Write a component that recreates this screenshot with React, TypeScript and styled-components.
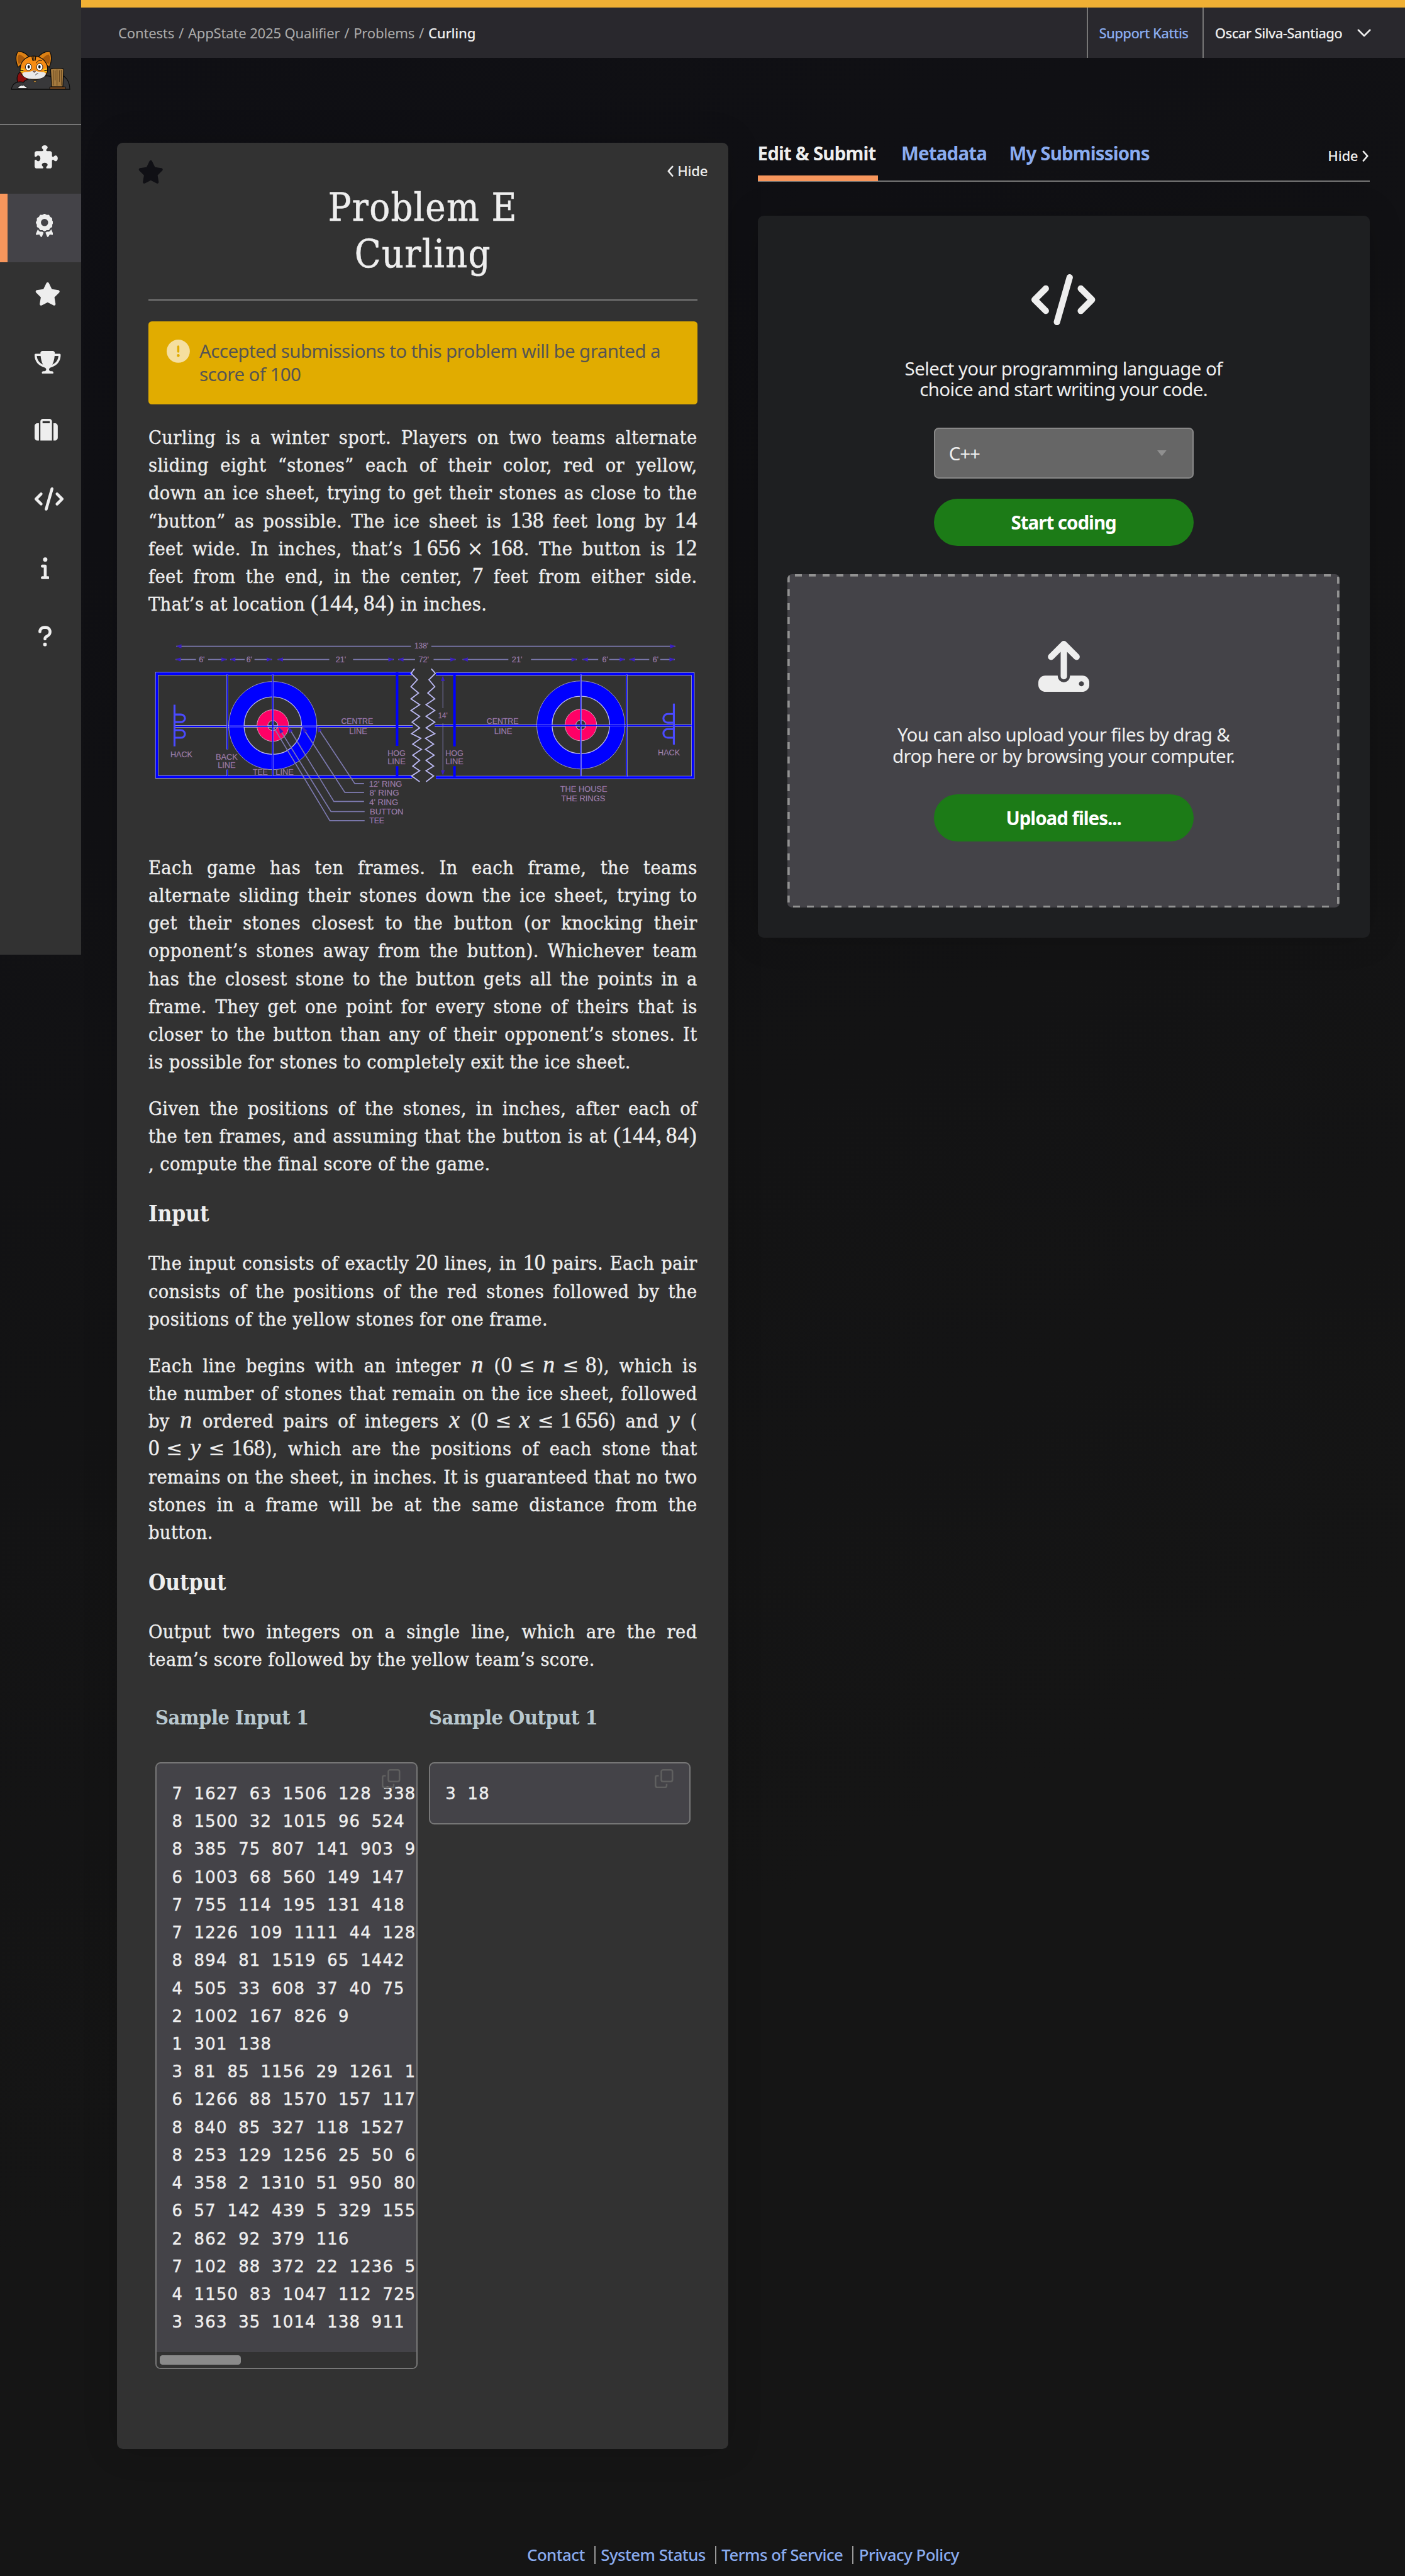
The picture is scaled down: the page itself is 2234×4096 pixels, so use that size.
import React from 'react';
import styled, { createGlobalStyle, css } from 'styled-components';
import {
  FaPuzzlePiece,
  FaAward,
  FaStar,
  FaTrophy,
  FaSuitcase,
  FaCode,
  FaInfo,
  FaQuestion,
  FaCircleExclamation,
} from 'react-icons/fa6';

const sans = `"Noto Sans", "Open Sans", sans-serif`;
const serif = `"DejaVu Serif Condensed", "DejaVu Serif", serif`;
const c = {
  text: '#eeeeee',
  panel: '#323232',
  raised: '#444348',
  line: '#777777',
  link: '#8aacf0',
  orange: '#f7965c',
  green: '#1c7b17',
};
// Just over two device pixels, so that the hairlines are not rounded down to one.
const hair = '0.22rem';

// The page is laid out on a grid of 242.4rem across.
const GlobalStyle = createGlobalStyle`
  html { font-size: 9.2162px; }
  body { margin: 0; background: #151515; color: ${c.text}; font-family: ${sans}; }
  *, *::before, *::after { box-sizing: border-box; }
  h1, h2, h3, p, pre { margin: 0; font-weight: normal; }
  svg { display: block; flex: none; }
`;

const Page = styled.div`
  display: flex;
  align-items: flex-start;
  width: 242.4rem;
  height: 444.4rem;
  overflow: hidden;
  background: linear-gradient(155deg, #0f0f14 0%, #101014 18%, #131314 45%, #151515 70%);
`;

/* ---------- sidebar ---------- */
const Sidebar = styled.aside`
  flex: none;
  width: 14rem;
  height: 164.7rem;
  background: ${c.panel};
`;
const Logo = styled.div`
  height: 21.6rem;
  padding: 8.7rem 0 0 1.8rem;
  border-bottom: ${hair} solid ${c.line};
  svg { width: 10.4rem; height: 6.9rem; }
`;
const NavItem = styled.div<{ $active?: boolean }>`
  display: flex;
  align-items: center;
  height: 11.8rem;
  padding: 0 0 0.8rem 6rem;
  ${(p) => p.$active && css`
    padding-left: 4.6rem;
    border-left: 1.4rem solid ${c.orange};
    background: ${c.raised};
  `}
`;
const NavGlyph = styled.span<{ $w: number }>`
  display: flex;
  justify-content: center;
  min-width: 3.5rem;
  svg { height: 4rem; width: ${(p) => p.$w}rem; }
`;

/* ---------- header ---------- */
const Main = styled.div`
  display: flex;
  flex-direction: column;
  width: 228.4rem;
  height: 444.4rem;
`;
const Header = styled.header`
  display: flex;
  height: 10rem;
  flex: none;
  border-top: 1.41rem solid #f0b034;
  background: #29282d;
  font-size: 2.4rem;
`;
const Crumbs = styled.nav`
  display: flex;
  align-items: center;
  gap: 0.75rem;
  flex: 1;
  padding-left: 6.4rem;
  color: #ababab;
  letter-spacing: -0.009em;
`;
const Current = styled.span`color: ${c.text}; font-weight: 500;`;
const HeaderCell = styled.div<{ $w: string; $link?: boolean }>`
  display: flex;
  align-items: center;
  gap: 2.6rem;
  width: ${(p) => p.$w};
  padding-left: 1.9rem;
  border-left: ${hair} solid ${c.line};
  color: ${(p) => (p.$link ? c.link : c.text)};
  font-weight: 500;
  letter-spacing: -0.029em;
  white-space: nowrap;
`;

/* ---------- columns ---------- */
const Columns = styled.div`
  display: flex;
  gap: 5rem;
  align-items: flex-start;
  padding: 14.6rem 6.1rem 0 6.2rem;
`;
const Problem = styled.article`
  width: 105.5rem;
  height: 397.95rem;
  flex: none;
  border-radius: 1rem;
  background: ${c.panel};
  box-shadow: 0 0 6rem rgba(0, 0, 0, 0.16);
`;
const CardTop = styled.div`
  display: flex;
  justify-content: space-between;
  align-items: flex-start;
  height: 7.3rem;
  padding: 3.1rem 3.6rem 0 3.6rem;
`;
const FavStar = styled(FaStar)`width: 4.5rem; height: 4rem; color: #101015;`;
const Hide = styled.div`
  display: flex;
  align-items: center;
  gap: 0.7rem;
  font-size: 2.4rem;
  line-height: 3.6rem;
  font-weight: 500;
  letter-spacing: -0.01em;
`;
const Body = styled.div`padding: 0 5.4rem; font-family: ${serif};`;
const Title = styled.h1`
  padding-bottom: 3.8rem;
  border-bottom: ${hair} solid ${c.line};
  font-size: 6.6rem;
  line-height: 8rem;
  letter-spacing: 0.02em;
  text-align: center;
  -webkit-text-stroke: 0.06rem;
`;
const Alert = styled.div`
  display: flex;
  gap: 1.6rem;
  height: 14.4rem;
  margin: 3.5rem 0 3.3rem;
  padding: 3.2rem 3.2rem 0;
  border-radius: 0.6rem;
  background: #e1ac00;
  color: #555453;
  font: 3.2rem/4rem ${sans};
  letter-spacing: -0.0195em;
  white-space: nowrap;
  svg { width: 4rem; height: 4rem; color: #f5dfa0; }
`;
const Para = styled.p`
  margin-bottom: 3.2rem;
  font-size: 3.3rem;
  line-height: 4.8rem;
  letter-spacing: 0.0145em;
  -webkit-text-stroke: 0.045rem;
`;
const Line = styled.span<{ $last?: boolean }>`
  display: block;
  height: 4.8rem;
  white-space: ${(p) => (p.$last ? 'nowrap' : 'normal')};
  text-align-last: ${(p) => (p.$last ? 'left' : 'justify')};
`;
const MathSpan = styled.span<{ $wide?: boolean }>`
  display: inline-block;
  font-family: "Liberation Serif", serif;
  font-size: 3.8rem;
  line-height: 0;
  letter-spacing: ${(p) => (p.$wide ? '0.028em' : '0.008em')};
  white-space: nowrap;
  text-align-last: left;
`;
const Op = styled.span`
  margin: 0 0.33em;
  font-family: "DejaVu Sans", sans-serif;
  font-size: 3.4rem;
  -webkit-text-stroke: 0;
`;
const Var = styled.i`margin: 0 0.04em; font-size: 4.1rem;`;
const Thin = styled.span`display: inline-block; width: 0.65rem;`;
const Section = styled.h2`
  margin: 3.75rem 0 3.8rem;
  font-size: 3.8rem;
  line-height: 4.8rem;
  font-weight: bold;
  letter-spacing: -0.004em;
`;
const Diagram = styled.svg`
  width: 94.7rem;
  height: 36rem;
  margin: -1.75rem 0 3.15rem;
`;

/* ---------- samples ---------- */
const Samples = styled.div`
  display: flex;
  gap: 2rem;
  margin-top: 5.1rem;
  padding: 0 1.2rem;
`;
const Sample = styled.section`width: 45.2rem;`;
const SampleTitle = styled.h3`
  margin-bottom: 5.3rem;
  color: #b8c8cf;
  font-size: 3.5rem;
  line-height: 4.8rem;
  font-weight: bold;
  letter-spacing: -0.014em;
  white-space: nowrap;
`;
const SampleBox = styled.div`
  position: relative;
  overflow: hidden;
  border: ${hair} solid ${c.line};
  border-radius: 0.9rem;
  background: ${c.raised};
`;
const Code = styled.pre`
  padding: 2.85rem 0 2.75rem 2.65rem;
  font: 2.8rem/4.8rem "DejaVu Sans", sans-serif;
  letter-spacing: 0.136rem;
  word-spacing: 0.88rem;
  -webkit-text-stroke: 0.05rem;
`;
const CopyBtn = styled.svg`
  position: absolute;
  top: 1rem;
  right: 2.7rem;
  width: 3.2rem;
  height: 3.3rem;
`;
const ScrollTrack = styled.div`height: 2.75rem; padding: 0.55rem; background: ${c.panel};`;
const ScrollThumb = styled.div`width: 14rem; height: 1.6rem; border-radius: 0.5rem; background: #8a8a8a;`;

/* ---------- submit panel ---------- */
const Submit = styled.section`width: 105.6rem;`;
const Tabs = styled.div`
  display: flex;
  gap: 4rem;
  height: 6.8rem;
  border-bottom: ${hair} solid ${c.line};
`;
const Tab = styled.div<{ $active?: boolean; $w: string }>`
  width: ${(p) => p.$w};
  height: 6.6rem;
  border-bottom: ${(p) => (p.$active ? `1rem solid ${c.orange}` : 'none')};
  color: ${(p) => (p.$active ? c.text : c.link)};
  font-size: 3.2rem;
  line-height: 3.6rem;
  font-weight: bold;
  letter-spacing: -0.028em;
  white-space: nowrap;
`;
const TabHide = styled(Hide)`margin-left: auto; height: 4.2rem; padding: 0.4rem 0.2rem 0 0;`;
const Panel = styled.div`
  display: flex;
  flex-direction: column;
  align-items: center;
  height: 124.6rem;
  margin-top: 5.8rem;
  padding-top: 10.1rem;
  border-radius: 1rem;
  background: #1e1f21;
  box-shadow: 0 0 6rem rgba(0, 0, 0, 0.16);
`;
const CodeGlyph = styled(FaCode)`width: 11rem; height: 8.8rem;`;
const Prompt = styled.p<{ $ls: string }>`
  margin: 5.6rem 0 4.8rem;
  font-size: 3.2rem;
  line-height: 3.66rem;
  letter-spacing: ${(p) => p.$ls};
  text-align: center;
  white-space: nowrap;
`;
const Select = styled.div`
  display: flex;
  align-items: center;
  justify-content: space-between;
  width: 44.8rem;
  height: 8.8rem;
  margin-bottom: 3.4rem;
  padding: 0 4.4rem 0 2.4rem;
  border: ${hair} solid #888;
  border-radius: 0.8rem;
  background: #666;
  font-size: 3.2rem;
  letter-spacing: -0.04em;
`;
const Button = styled.div`
  display: flex;
  align-items: center;
  justify-content: center;
  width: 44.8rem;
  height: 8.2rem;
  flex: none;
  border-radius: 4.1rem;
  background: ${c.green};
  color: #fff;
  font-size: 3.2rem;
  font-weight: bold;
  letter-spacing: -0.034em;
`;
const dash = '#929292 0 1.2rem, transparent 1.2rem 2.4rem';
const DropZone = styled.div`
  display: flex;
  flex-direction: column;
  align-items: center;
  width: 95.2rem;
  height: 57.5rem;
  margin-top: 4.9rem;
  padding-top: 11.4rem;
  border-radius: 0.8rem;
  background:
    repeating-linear-gradient(90deg, ${dash}) 1.3rem 0 / 93rem 0.4rem no-repeat,
    repeating-linear-gradient(90deg, ${dash}) 0.9rem 100% / 93.4rem 0.4rem no-repeat,
    repeating-linear-gradient(180deg, ${dash}) 0 0.2rem / 0.4rem 57rem no-repeat,
    repeating-linear-gradient(180deg, ${dash}) 100% 0.4rem / 0.4rem 57rem no-repeat,
    ${c.raised};
`;

/* ---------- footer ---------- */
const Footer = styled.footer`
  display: flex;
  justify-content: center;
  margin-top: auto;
  padding-bottom: 2rem;
  font-size: 2.8rem;
  line-height: 3.2rem;
  letter-spacing: -0.021em;
`;
const FooterLink = styled.a`
  padding: 0 1.6rem 0 0.95rem;
  border-left: ${hair} solid #999;
  color: ${c.link};
  font-weight: 500;
  &:first-child { padding-left: 0; border-left: 0; }
  &:last-child { padding-right: 0; }
`;

/* ---------- drawings ---------- */
const Chevron = ({ d, w, h }: { d: string; w: number; h: number }) => (
  <svg viewBox={`0 0 ${w} ${h}`} width={`${w / 10}rem`} height={`${h / 10}rem`}>
    <path d={d} fill="none" stroke="currentColor" strokeWidth="2.8" strokeLinecap="round" strokeLinejoin="round" />
  </svg>
);

const Cat = () => (
  <svg viewBox="24 22 312 204" stroke="#0c0c0c" strokeWidth="4" strokeLinejoin="round">
    <path d="M62 190 C50 160 62 135 82 128 L190 132 C210 140 214 165 205 185Z" fill="#8c0d0d" />
    <path d="M28 222 C32 190 60 178 90 186 C110 160 150 165 155 165 C200 150 225 150 236 160 L300 155 C325 175 330 200 330 222Z" fill="#38383a" />
    <path d="M62 108 C48 74 50 44 62 27 C92 26 112 42 120 60Z" fill="#dd8114" />
    <path d="M66 92 C56 66 58 52 68 42 C84 48 96 58 100 68Z" fill="#a85a0c" stroke="none" />
    <path d="M224 108 C238 74 236 44 226 27 C196 26 174 42 166 60Z" fill="#dd8114" />
    <path d="M222 92 C232 66 228 52 220 42 C204 48 192 58 188 68Z" fill="#a85a0c" stroke="none" />
    <path d="M143 50 C190 50 218 90 215 122 C214 152 185 171 146 171 C105 171 73 152 73 118 C74 80 100 50 143 50Z" fill="#f58c14" />
    <path d="M76 116 l18 5 M74 130 l18 1 M212 116 l-18 5 M212 130 l-18 1" stroke="#f8c81c" strokeWidth="6" />
    <path d="M76 124 l14 3 M212 124 l-14 3" strokeWidth="4" />
    <path d="M134 52 l4 22 M144 50 v26 M154 51 l-3 23" strokeWidth="4" />
    <path d="M84 140 C96 128 124 136 145 124 C168 136 192 128 206 140 C204 160 182 169 146 169 C108 169 86 160 84 140Z" fill="#e9e9ea" stroke="none" />
    <ellipse cx="116" cy="107" rx="16" ry="18" fill="#fff" strokeWidth="3" />
    <ellipse cx="174" cy="107" rx="16" ry="18" fill="#fff" strokeWidth="3" />
    <ellipse cx="117" cy="106" rx="6" ry="9" fill="#111" stroke="none" />
    <ellipse cx="173" cy="106" rx="6" ry="9" fill="#111" stroke="none" />
    <path d="M139 128 h14 l-7 8Z" fill="#c98c82" strokeWidth="2" />
    <path d="M152 148 q4 -6 14 -7 M156 88 q10 -20 30 -14" fill="none" strokeWidth="3" />
    <path d="M138 178 h22 l-10 10Z" fill="#b08238" strokeWidth="2" />
    <path d="M230 118 C242 112 288 112 298 118 L294 210 H236Z" fill="#a57a3e" />
    <path d="M244 122 v80 M254 126 v50 M264 120 v84 M276 124 v60 M286 122 v80" stroke="#5a3d18" strokeWidth="3" />
    <path d="M226 210 H308 V221 H226Z" fill="#7a4a20" strokeWidth="3" />
    <path d="M62 218 q0 -14 10 -12 q4 -8 12 -3 q8 -5 13 3 q12 0 12 12Z" fill="#eee" strokeWidth="3" />
    <path d="M26 222 H332" />
  </svg>
);

const UploadGlyph = () => (
  <svg viewBox="0 0 88 88" width="8.8rem" height="8.8rem">
    <path
      d="M12 60 H33.5 V61 a10.5 10.5 0 0 0 21 0 V60 H76 a12 12 0 0 1 12 12 V76 a12 12 0 0 1 -12 12 H12 a12 12 0 0 1 -12 -12 V72 a12 12 0 0 1 12 -12Z M74.3 69.8 a4.3 4.3 0 1 0 0.01 0Z"
      fill={c.text}
      fillRule="evenodd"
    />
    <path d="M22 27.5 L44 5.5 L66 27.5 M44 8 V61" fill="none" stroke={c.text} strokeWidth="11" strokeLinecap="round" strokeLinejoin="round" />
  </svg>
);

const CopyIcon = () => (
  <CopyBtn viewBox="0 0 32 33" fill="none" stroke="#5f5f5f" strokeWidth="2.8">
    <rect x="11.4" y="1.4" width="19.2" height="20" rx="3" />
    <path d="M7 11.4 H4.4 a3 3 0 0 0 -3 3 V28.6 a3 3 0 0 0 3 3 H17.6 a3 3 0 0 0 3 -3 V25.4" />
  </CopyBtn>
);

const BLUE = '#0000ff';
const PALE = '#b9b7f0';
const DIM = '#7d7ab0';

const zigY = [72, 80, 91, 103, 114, 124, 134, 144, 154, 164, 174, 184, 192, 202, 211, 221, 230, 240, 248, 257, 267];
const zigL = [475, 469, 480, 469, 482, 469, 484, 469, 484, 471, 484, 470, 486, 472, 487, 472, 484, 472, 484, 470, 484];
const zigR = [504, 511, 500, 510, 498, 510, 495, 510, 495, 510, 495, 510, 494, 508, 494, 509, 495, 508, 495, 508, 495];
const zig = (xs: number[]) => xs.map((x, i) => `${x},${zigY[i]}`).join(' ');

const House = ({ x, y }: { x: number; y: number }) => (
  <g>
    <circle cx={x} cy={y} r="62.5" fill="none" stroke={BLUE} strokeWidth="26" />
    <circle cx={x} cy={y} r="76" fill="none" stroke={PALE} strokeWidth="0.8" />
    <circle cx={x} cy={y} r="49.5" fill="none" stroke={PALE} strokeWidth="1.4" />
    <circle cx={x} cy={y} r="18" fill="none" stroke="#ff0066" strokeWidth="18" />
    <circle cx={x} cy={y} r="27.3" fill="none" stroke="#e8a8c8" strokeWidth="1" />
    <circle cx={x} cy={y} r="8.6" fill="none" stroke="#e8c8e8" strokeWidth="1" />
  </g>
);

const Span = ({ x1, x2, y, gap }: { x1: number; x2: number; y: number; gap: [number, number] }) => (
  <g>
    <path d={`M${x1} ${y} H${gap[0]} M${gap[1]} ${y} H${x2}`} stroke={DIM} strokeWidth="1.8" />
    <path d={`M${x1} ${y} l9 -3.6 v7.2Z M${x2} ${y} l-9 -3.6 v7.2Z`} fill="#3a1fc0" />
  </g>
);

const labels: [string, number, number, number][] = [
  ["138'", 487, 37, 24], ["6'", 108, 61, 10], ["6'", 190, 61, 10], ["21'", 348, 61, 18], ["72'", 491, 61, 18],
  ["21'", 652, 61, 18], ["6'", 804, 61, 10], ["6'", 891, 61, 10], ["14'", 524, 157, 16],
  ['CENTRE', 376, 167, 55], ['LINE', 378, 185, 31], ['CENTRE', 627, 167, 55], ['LINE', 628, 185, 31],
  ['HACK', 73, 225, 38], ['BACK', 151, 229, 38], ['LINE', 151, 243, 31], ['TEE', 209, 255, 26], ['LINE', 251, 255, 31],
  ['HOG', 444, 222, 31], ['LINE', 444, 237, 31], ['HOG', 544, 222, 31], ['LINE', 544, 237, 31], ['HACK', 914, 221, 38],
  ["12' RING", 425, 276, 57], ["8' RING", 423, 291, 51], ["4' RING", 422, 307, 50], ['BUTTON', 427, 323, 58], ['TEE', 410, 339, 26],
  ['THE HOUSE', 767, 284, 81], ['THE RINGS', 766, 301, 76],
];

const Rink = () => (
  <Diagram viewBox="16 0 947 360">
    <g fill="none">
      <Span x1={64} x2={925} y={33.3} gap={[469, 504]} />
      <Span x1={63} x2={151} y={56} gap={[98, 119]} />
      <Span x1={157} x2={229} y={56} gap={[182, 199]} />
      <Span x1={239} x2={439} y={56} gap={[328, 369]} />
      <Span x1={447} x2={546} y={56} gap={[476, 508]} />
      <Span x1={558} x2={755} y={56} gap={[637, 676]} />
      <Span x1={765} x2={838} y={56} gap={[792, 811]} />
      <Span x1={846} x2={924} y={56} gap={[880, 899]} />
      <path d="M471 80.5 H30.5 V258.5 H471" stroke={PALE} strokeWidth="5.4" />
      <path d="M471 80.5 H30.5 V258.5 H471" stroke={BLUE} strokeWidth="4" />
      <path d="M512 81 H955.5 V259.5 H512" stroke={PALE} strokeWidth="5.4" />
      <path d="M512 81 H955.5 V259.5 H512" stroke={BLUE} strokeWidth="4" />
      <path d="M61 171.5 H472 M510 170 H953" stroke={PALE} strokeWidth="3.8" />
      <path d="M61 171.5 H472 M510 170 H953" stroke={BLUE} strokeWidth="2.2" />
      <path d="M445 78 V205 M445 240 V258 M544 82 V206 M544 240 V258" stroke={BLUE} strokeWidth="4.4" />
      <path d="M152 82 V211 M152 246 V257 M841 82 V258" stroke={PALE} strokeWidth="2.8" />
      <path d="M152 82 V211 M152 246 V257 M841 82 V258" stroke={BLUE} strokeWidth="1.6" />
      <path d="M524 86 V140 M524 166 V254" stroke={DIM} strokeWidth="1" />
      <path d="M524 84 l-3.4 9 h6.8Z M524 256 l-3.4 -9 h6.8Z" fill="#3a1fc0" />
      <House x={230.6} y={170} />
      <House x={762} y={169} />
      <path d="M230.6 82 V257 M762 82 V257 M156 171.5 H306 M686 169.8 H838" stroke={PALE} strokeWidth="2.8" />
      <path d="M230.6 82 V257 M762 82 V257 M156 171.5 H306 M686 169.8 H838" stroke={BLUE} strokeWidth="1.6" />
      <g stroke="#4a4aff" strokeWidth="3.4">
        <path d="M61 134 V206 M62 151 H72 a7 6.5 0 0 1 0 13 H62 M62 178 H72 a7 6.5 0 0 1 0 13 H62" />
        <path d="M922.5 132 V203 M922 150 H912 a7 7 0 0 0 0 15 H922 M922 176 H912 a7 7 0 0 0 0 15 H922" />
      </g>
      <g stroke={DIM} strokeWidth="1.8">
        <path d="M307 172 L372 270 H388" />
        <path d="M281 172 L355 285.5 H388" />
        <path d="M257 172 L336 301 H388" />
        <path d="M241 174 L331 318.5 H389" />
        <path d="M232 173 L329 334 H389" />
      </g>
      <path d="M307 171 l8 7 -6 4Z M282 172 l8 7 -6 4Z M257 172 l8 7 -6 4Z M241 173 l8 7 -6 4Z" fill="#3a1fc0" />
      <polyline points={zig(zigL)} stroke={PALE} strokeWidth="2" />
      <polyline points={zig(zigR)} stroke={PALE} strokeWidth="2" />
    </g>
    <g fill="#a892b6" stroke="#7a4f86" strokeWidth="0.3" fontFamily="Liberation Sans, sans-serif" fontSize="14" textAnchor="middle">
      {labels.map(([t, x, y, w], i) => (
        <text key={i} x={x} y={y} textLength={w} lengthAdjust="spacingAndGlyphs">{t}</text>
      ))}
    </g>
  </Diagram>
);

/* ---------- content ---------- */
const M = MathSpan;
const Point = () => <M $wide>(144,<Thin />84)</M>;
const Leq = () => <Op>≤</Op>;

const Text = ({ lines }: { lines: React.ReactNode[] }) => (
  <Para>
    {lines.map((l, i) => (
      <Line key={i} $last={i === lines.length - 1}>{l}</Line>
    ))}
  </Para>
);

const nav = [
  { Icon: FaPuzzlePiece, w: 4 },
  { Icon: FaAward, w: 3, active: true },
  { Icon: FaStar, w: 4.5 },
  { Icon: FaTrophy, w: 4.5 },
  { Icon: FaSuitcase, w: 4 },
  { Icon: FaCode, w: 5 },
  { Icon: FaInfo, w: 1.5 },
  { Icon: FaQuestion, w: 2.5 },
];

const sampleInput = `7 1627 63 1506 128 338
8 1500 32 1015 96 524
8 385 75 807 141 903 9
6 1003 68 560 149 147
7 755 114 195 131 418
7 1226 109 1111 44 128
8 894 81 1519 65 1442
4 505 33 608 37 40 75
2 1002 167 826 9
1 301 138
3 81 85 1156 29 1261 1
6 1266 88 1570 157 117
8 840 85 327 118 1527
8 253 129 1256 25 50 6
4 358 2 1310 51 950 80
6 57 142 439 5 329 155
2 862 92 379 116
7 102 88 372 22 1236 5
4 1150 83 1047 112 725
3 363 35 1014 138 911`;

export default function App() {
  return (
    <>
      <GlobalStyle />
      <Page>
        <Sidebar>
          <Logo><Cat /></Logo>
          {nav.map(({ Icon, w, active }, i) => (
            <NavItem key={i} $active={active}>
              <NavGlyph $w={w}><Icon /></NavGlyph>
            </NavItem>
          ))}
        </Sidebar>
        <Main>
          <Header>
            <Crumbs>
              <span>Contests</span><span>/</span><span>AppState 2025 Qualifier</span><span>/</span>
              <span>Problems</span><span>/</span><Current>Curling</Current>
            </Crumbs>
            <HeaderCell $w="20rem" $link>Support Kattis</HeaderCell>
            <HeaderCell $w="34.9rem">
              Oscar Silva-Santiago
              <Chevron w={24} h={16} d="M2 3 L12 13 L22 3" />
            </HeaderCell>
          </Header>
          <Columns>
            <Problem>
              <CardTop>
                <FavStar />
                <Hide><Chevron w={11} h={20} d="M9 2 L2 10 L9 18" />Hide</Hide>
              </CardTop>
              <Body>
                <Title>Problem E<br />Curling</Title>
                <Alert>
                  <FaCircleExclamation />
                  <div>Accepted submissions to this problem will be granted a<br />score of 100</div>
                </Alert>
                <Text
                  lines={[
                    'Curling is a winter sport. Players on two teams alternate',
                    'sliding eight “stones” each of their color, red or yellow,',
                    'down an ice sheet, trying to get their stones as close to the',
                    <>“button” as possible. The ice sheet is <M>138</M> feet long by <M>14</M></>,
                    <>feet wide. In inches, that’s <M>1<Thin />656<Op>×</Op>168</M>. The button is <M>12</M></>,
                    <>feet from the end, in the center, <M>7</M> feet from either side.</>,
                    <>That’s at location <Point /> in inches.</>,
                  ]}
                />
                <Rink />
                <Text
                  lines={[
                    'Each game has ten frames. In each frame, the teams',
                    'alternate sliding their stones down the ice sheet, trying to',
                    'get their stones closest to the button (or knocking their',
                    'opponent’s stones away from the button). Whichever team',
                    'has the closest stone to the button gets all the points in a',
                    'frame. They get one point for every stone of theirs that is',
                    'closer to the button than any of their opponent’s stones. It',
                    'is possible for stones to completely exit the ice sheet.',
                  ]}
                />
                <Text
                  lines={[
                    'Given the positions of the stones, in inches, after each of',
                    <>the ten frames, and assuming that the button is at <Point /></>,
                    ', compute the final score of the game.',
                  ]}
                />
                <Section>Input</Section>
                <Text
                  lines={[
                    <>The input consists of exactly <M>20</M> lines, in <M>10</M> pairs. Each pair</>,
                    'consists of the positions of the red stones followed by the',
                    'positions of the yellow stones for one frame.',
                  ]}
                />
                <Text
                  lines={[
                    <>Each line begins with an integer <M><Var>n</Var></M> (<M>0<Leq /><Var>n</Var><Leq />8</M>), which is</>,
                    'the number of stones that remain on the ice sheet, followed',
                    <>by <M><Var>n</Var></M> ordered pairs of integers <M><Var>x</Var></M> (<M>0<Leq /><Var>x</Var><Leq />1<Thin />656</M>) and <M><Var>y</Var></M> (</>,
                    <><M>0<Leq /><Var>y</Var><Leq />168</M>), which are the positions of each stone that</>,
                    'remains on the sheet, in inches. It is guaranteed that no two',
                    'stones in a frame will be at the same distance from the',
                    'button.',
                  ]}
                />
                <Section>Output</Section>
                <Text
                  lines={[
                    'Output two integers on a single line, which are the red',
                    'team’s score followed by the yellow team’s score.',
                  ]}
                />
                <Samples>
                  <Sample>
                    <SampleTitle>Sample Input 1</SampleTitle>
                    <SampleBox>
                      <CopyIcon />
                      <Code>{sampleInput}</Code>
                      <ScrollTrack><ScrollThumb /></ScrollTrack>
                    </SampleBox>
                  </Sample>
                  <Sample>
                    <SampleTitle>Sample Output 1</SampleTitle>
                    <SampleBox>
                      <CopyIcon />
                      <Code>3 18</Code>
                    </SampleBox>
                  </Sample>
                </Samples>
              </Body>
            </Problem>
            <Submit>
              <Tabs>
                <Tab $active $w="20.8rem">Edit &amp; Submit</Tab>
                <Tab $w="14.6rem">Metadata</Tab>
                <Tab $w="24.2rem">My Submissions</Tab>
                <TabHide>Hide<Chevron w={11} h={20} d="M2 2 L9 10 L2 18" /></TabHide>
              </Tabs>
              <Panel>
                <CodeGlyph />
                <Prompt $ls="-0.021em">Select your programming language of<br />choice and start writing your code.</Prompt>
                <Select>
                  C++
                  <svg viewBox="0 0 16 10" width="1.6rem" height="1rem"><path d="M0 0 H16 L8 10Z" fill="#909090" /></svg>
                </Select>
                <Button>Start coding</Button>
                <DropZone>
                  <UploadGlyph />
                  <Prompt $ls="-0.02em">You can also upload your files by drag &amp;<br />drop here or by browsing your computer.</Prompt>
                  <Button>Upload files...</Button>
                </DropZone>
              </Panel>
            </Submit>
          </Columns>
          <Footer>
            <FooterLink>Contact</FooterLink>
            <FooterLink>System Status</FooterLink>
            <FooterLink>Terms of Service</FooterLink>
            <FooterLink>Privacy Policy</FooterLink>
          </Footer>
        </Main>
      </Page>
    </>
  );
}
